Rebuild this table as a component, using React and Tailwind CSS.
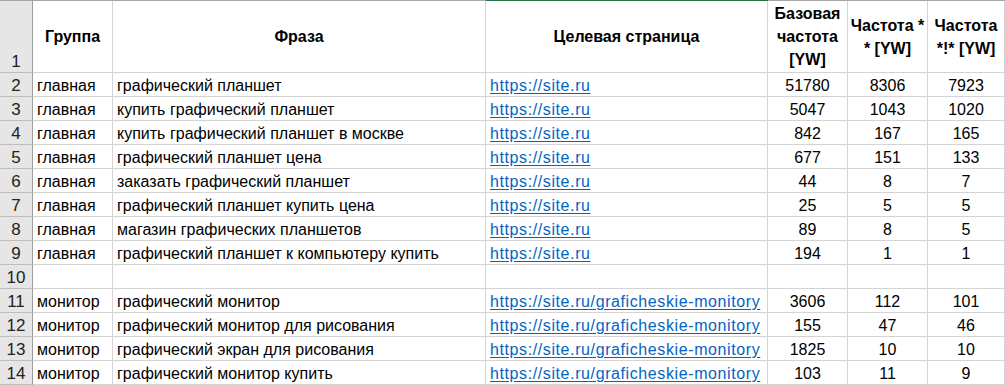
const rows = [
  ["главная", "графический планшет", "https://site.ru", 51780, 8306, 7923],
  ["главная", "купить графический планшет", "https://site.ru", 5047, 1043, 1020],
  ["главная", "купить графический планшет в москве", "https://site.ru", 842, 167, 165],
  ["главная", "графический планшет цена", "https://site.ru", 677, 151, 133],
  ["главная", "заказать графический планшет", "https://site.ru", 44, 8, 7],
  ["главная", "графический планшет купить цена", "https://site.ru", 25, 5, 5],
  ["главная", "магазин графических планшетов", "https://site.ru", 89, 8, 5],
  ["главная", "графический планшет к компьютеру купить", "https://site.ru", 194, 1, 1],
  null,
  ["монитор", "графический монитор", "https://site.ru/graficheskie-monitory", 3606, 112, 101],
  ["монитор", "графический монитор для рисования", "https://site.ru/graficheskie-monitory", 155, 47, 46],
  ["монитор", "графический экран для рисования", "https://site.ru/graficheskie-monitory", 1825, 10, 10],
  ["монитор", "графический монитор купить", "https://site.ru/graficheskie-monitory", 103, 11, 9],
];

const cols = "grid grid-cols-[33px_80px_373px_282px_80px_80px_1fr]";
const cell = "border-r border-b border-[#d4d4d4] flex items-end leading-[20px] overflow-hidden whitespace-nowrap";
const rowHead = "border-r border-b border-r-[#9e9e9e] border-b-[#bdbdbd] bg-[#e6e6e6] flex items-end justify-center leading-[20px] text-[17px] text-[#222]";
const head = "border-r border-b border-[#d4d4d4] flex items-center justify-center text-center font-bold leading-[23px]";

export default function App() {
  return (
    <div className="w-[1005px] h-[385px] overflow-hidden bg-white text-black text-[16px] font-['Liberation_Sans',Arial,sans-serif]">
      {/* column header edge */}
      <div className={`${cols} h-px`}>
        <div className="col-span-3 bg-[#a6a6a6]" />
        <div className="bg-[#217346]" />
        <div className="col-span-3 bg-[#a6a6a6]" />
      </div>

      {/* row 1: headers */}
      <div className={`${cols} h-[72px]`}>
        <div className={rowHead}>1</div>
        <div className={head}>Группа</div>
        <div className={head}>Фраза</div>
        <div className={head}>Целевая страница</div>
        <div className={head}>
          Базовая
          <br />
          частота
          <br />
          [YW]
        </div>
        <div className={head}>
          Частота *
          <br />* [YW]
        </div>
        <div className={head}>
          Частота
          <br />
          *!* [YW]
        </div>
      </div>

      {rows.map((r, i) => (
        <div key={i} className={`${cols} h-6`}>
          <div className={rowHead}>{i + 2}</div>
          {r ? (
            <>
              <div className={`${cell} pl-1`}>{r[0]}</div>
              <div className={`${cell} pl-1`}>{r[1]}</div>
              <div className={`${cell} pl-1`}>
                <span className="text-[#0563c1] underline underline-offset-2 tracking-[0.6px]">{r[2]}</span>
              </div>
              <div className={`${cell} justify-center`}>{r[3]}</div>
              <div className={`${cell} justify-center`}>{r[4]}</div>
              <div className={`${cell} justify-center`}>{r[5]}</div>
            </>
          ) : (
            <>
              <div className={cell} />
              <div className={cell} />
              <div className={cell} />
              <div className={cell} />
              <div className={cell} />
              <div className={cell} />
            </>
          )}
        </div>
      ))}
    </div>
  );
}
